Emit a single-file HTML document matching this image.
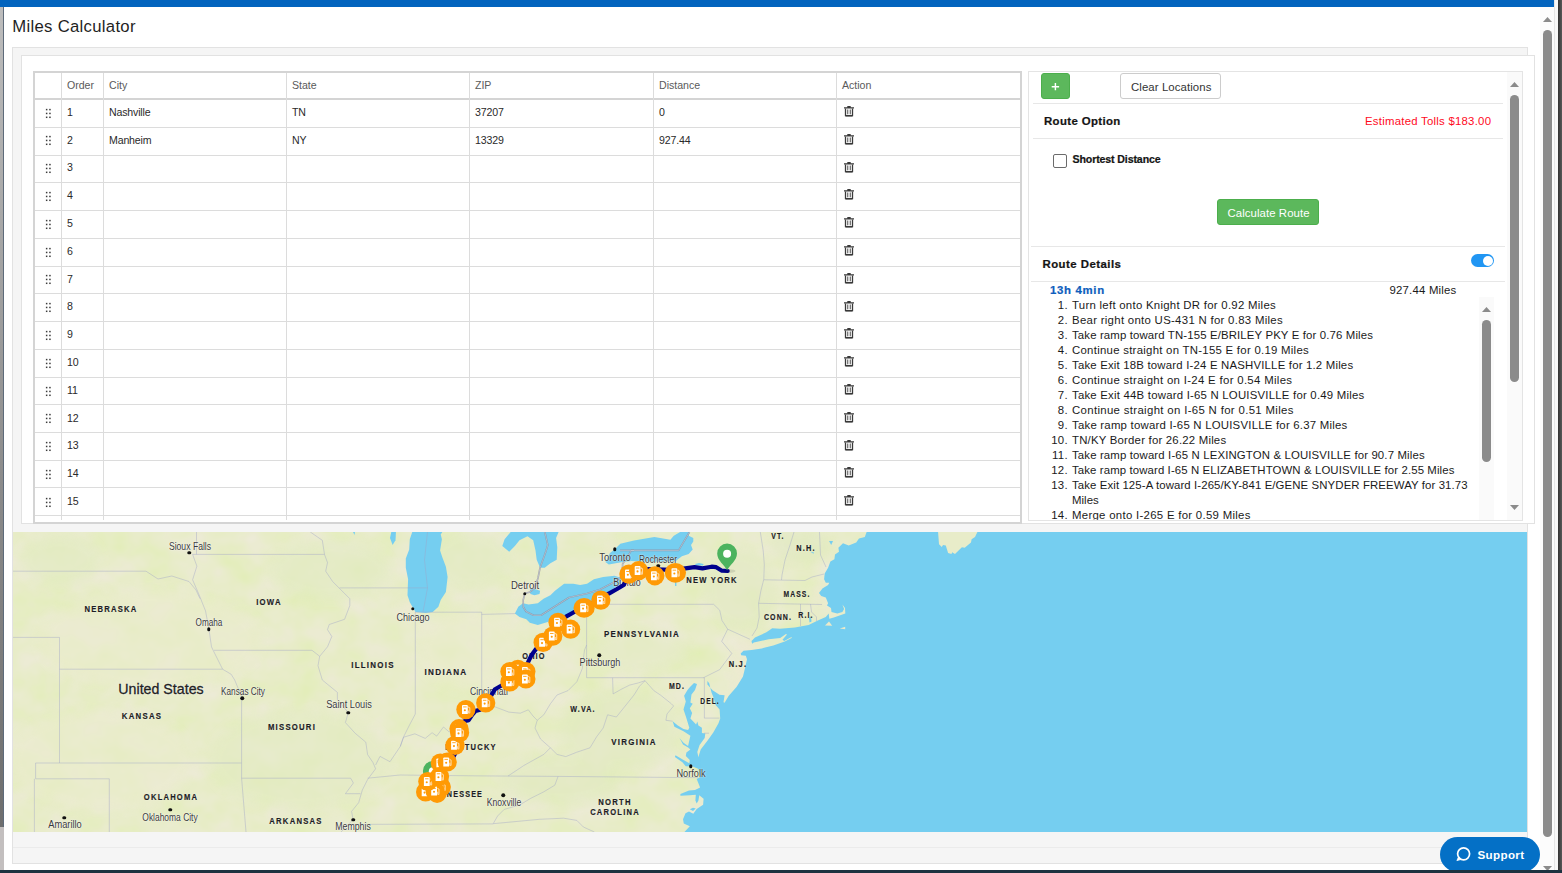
<!DOCTYPE html><html><head><meta charset="utf-8"><title>Miles Calculator</title><style>
*{box-sizing:border-box;margin:0;padding:0}
html,body{width:1562px;height:873px;overflow:hidden;background:#fff}
body{position:relative;font-family:"Liberation Sans",sans-serif;color:#222}
.abs{position:absolute}
.t{position:absolute;white-space:nowrap;line-height:1}
/* table text */
.c{position:absolute;white-space:nowrap;font-size:10.6px;line-height:12px;color:#2a2a2a;letter-spacing:-0.17px}
.h{position:absolute;white-space:nowrap;font-size:10.6px;line-height:12px;color:#5a5a5a;letter-spacing:-0.02px}
.vl{position:absolute;width:1px;background:#dcdcdc}
.hl{position:absolute;height:1px;background:#dcdcdc}
.dot{position:absolute;width:1.6px;height:1.6px;background:#505050;border-radius:.4px}
.v{position:absolute;white-space:nowrap;font-size:11.4px;line-height:15px;color:#1a1a1a;letter-spacing:.33px}
.vb{position:absolute;white-space:nowrap;font-weight:bold;color:#141414;-webkit-text-stroke:.22px currentColor}
.hr{position:absolute;height:1px;background:#e7e7e7}
.thumb{position:absolute;width:9px;background:#8b8b8b;border-radius:4.5px}
.ml{position:absolute;white-space:nowrap;font-weight:bold;font-size:9px;line-height:10px;color:#1d1d24;letter-spacing:1.55px;transform:translate(-50%,-50%);-webkit-text-stroke:.18px currentColor;text-shadow:0 0 2px rgba(255,255,255,.55)}
.mc{position:absolute;white-space:nowrap;font-size:10.2px;line-height:11px;color:#3a3a3a;transform:translate(-50%,-50%);text-shadow:0 0 2px rgba(255,255,255,.8),0 0 1px rgba(255,255,255,.8)}
.cd{position:absolute;width:3.5px;height:3.5px;border-radius:2px;background:#111;transform:translate(-50%,-50%)}
</style></head><body>
<div class="abs" style="left:0;top:0;width:1554px;height:7px;background:#0364be"></div>
<div class="abs" style="left:0;top:7px;width:3px;height:820px;background:linear-gradient(#bdbdbd 0,#a9a9a9 25%,#8a8a8a 60%,#6e6e6e 100%)"></div>
<div class="abs" style="left:3px;top:7px;width:1px;height:820px;background:#5e6b7a"></div>
<div class="abs" style="left:0;top:827px;width:4px;height:43px;background:#c3bfbf"></div>
<div class="abs" style="left:1540px;top:7px;width:14px;height:863px;background:#fcfcfc"></div>
<div class="abs" style="left:1554px;top:0;width:1px;height:870px;background:#e6e6e6"></div>
<div class="abs" style="left:1555px;top:0;width:3px;height:870px;background:#f8f8f8"></div>
<div class="abs" style="left:1558px;top:0;width:4px;height:870px;background:linear-gradient(90deg,#333,#585858)"></div>
<svg class="abs" style="left:1543px;top:17px" width="9" height="5"><path d="M0 5L4.5 0L9 5Z" fill="#8b8b8b"/></svg>
<div class="thumb" style="left:1543px;top:30px;height:807px"></div>
<svg class="abs" style="left:1543px;top:866px" width="9" height="5"><path d="M0 0L9 0L4.5 5Z" fill="#8b8b8b"/></svg>
<div class="abs" style="left:0;top:870px;width:1562px;height:3px;background:#1d3240"></div>
<div class="t" style="left:12.3px;top:17px;font-size:16.7px;line-height:20px;color:#1f1f1f;letter-spacing:.3px" id="title">Miles Calculator</div>
<div class="abs" style="left:12px;top:47px;width:1516px;height:817px;background:#f5f5f5;border:1px solid #e2e2e2"></div>
<div class="abs" style="left:13px;top:847px;width:1514px;height:1px;background:#ebebeb"></div>
<div class="abs" style="left:21px;top:55px;width:1514px;height:469px;background:#fff;border:1px solid #e2e2e2"></div>
<div class="abs" style="left:33px;top:71px;width:989px;height:453px;background:#fff;border:2px solid #d4d4d4"></div>
<div class="abs" style="left:35px;top:98px;width:985px;height:2px;background:#d4d4d4"></div>
<div class="vl" style="left:61px;top:73px;height:447px"></div>
<div class="vl" style="left:103px;top:73px;height:447px"></div>
<div class="vl" style="left:286px;top:73px;height:447px"></div>
<div class="vl" style="left:469px;top:73px;height:447px"></div>
<div class="vl" style="left:653px;top:73px;height:447px"></div>
<div class="vl" style="left:836px;top:73px;height:447px"></div>
<div class="h" style="left:67px;top:79px">Order</div>
<div class="h" style="left:109px;top:79px">City</div>
<div class="h" style="left:292px;top:79px">State</div>
<div class="h" style="left:475px;top:79px">ZIP</div>
<div class="h" style="left:659px;top:79px">Distance</div>
<div class="h" style="left:842px;top:79px">Action</div>
<div class="hl" style="left:35px;top:127px;width:985px"></div>
<svg class="abs" style="left:45px;top:107.65px" width="7" height="11" viewBox="0 0 7 11"><rect x="0.90" y="0.85" width="1.5" height="1.5" fill="#3c3c3c"/><rect x="0.90" y="4.70" width="1.5" height="1.5" fill="#3c3c3c"/><rect x="0.90" y="8.55" width="1.5" height="1.5" fill="#3c3c3c"/><rect x="4.20" y="0.85" width="1.5" height="1.5" fill="#3c3c3c"/><rect x="4.20" y="4.70" width="1.5" height="1.5" fill="#3c3c3c"/><rect x="4.20" y="8.55" width="1.5" height="1.5" fill="#3c3c3c"/></svg>
<div class="c" style="left:67px;top:105.8px">1</div>
<div class="c" style="left:109px;top:105.8px">Nashville</div>
<div class="c" style="left:292px;top:105.8px">TN</div>
<div class="c" style="left:475px;top:105.8px">37207</div>
<div class="c" style="left:659px;top:105.8px">0</div>
<svg class="abs" style="left:844px;top:105.9px" width="10" height="11" viewBox="0 0 10 11"><path d="M0 1.9h10M3.3 .6h3.4" stroke="#3a3a3a" stroke-width="1.2" fill="none"/><path d="M1.5 2.5v7.2h7V2.5" stroke="#3a3a3a" stroke-width="1.3" fill="none"/><path d="M3.75 3.5v4.8M6.25 3.5v4.8" stroke="#444" stroke-width=".95"/><path d="M1.5 9.9h7" stroke="#3a3a3a" stroke-width="1.2"/></svg>
<div class="hl" style="left:35px;top:155px;width:985px"></div>
<svg class="abs" style="left:45px;top:135.45px" width="7" height="11" viewBox="0 0 7 11"><rect x="0.90" y="0.85" width="1.5" height="1.5" fill="#3c3c3c"/><rect x="0.90" y="4.70" width="1.5" height="1.5" fill="#3c3c3c"/><rect x="0.90" y="8.55" width="1.5" height="1.5" fill="#3c3c3c"/><rect x="4.20" y="0.85" width="1.5" height="1.5" fill="#3c3c3c"/><rect x="4.20" y="4.70" width="1.5" height="1.5" fill="#3c3c3c"/><rect x="4.20" y="8.55" width="1.5" height="1.5" fill="#3c3c3c"/></svg>
<div class="c" style="left:67px;top:133.6px">2</div>
<div class="c" style="left:109px;top:133.6px">Manheim</div>
<div class="c" style="left:292px;top:133.6px">NY</div>
<div class="c" style="left:475px;top:133.6px">13329</div>
<div class="c" style="left:659px;top:133.6px">927.44</div>
<svg class="abs" style="left:844px;top:133.7px" width="10" height="11" viewBox="0 0 10 11"><path d="M0 1.9h10M3.3 .6h3.4" stroke="#3a3a3a" stroke-width="1.2" fill="none"/><path d="M1.5 2.5v7.2h7V2.5" stroke="#3a3a3a" stroke-width="1.3" fill="none"/><path d="M3.75 3.5v4.8M6.25 3.5v4.8" stroke="#444" stroke-width=".95"/><path d="M1.5 9.9h7" stroke="#3a3a3a" stroke-width="1.2"/></svg>
<div class="hl" style="left:35px;top:182px;width:985px"></div>
<svg class="abs" style="left:45px;top:163.25px" width="7" height="11" viewBox="0 0 7 11"><rect x="0.90" y="0.85" width="1.5" height="1.5" fill="#3c3c3c"/><rect x="0.90" y="4.70" width="1.5" height="1.5" fill="#3c3c3c"/><rect x="0.90" y="8.55" width="1.5" height="1.5" fill="#3c3c3c"/><rect x="4.20" y="0.85" width="1.5" height="1.5" fill="#3c3c3c"/><rect x="4.20" y="4.70" width="1.5" height="1.5" fill="#3c3c3c"/><rect x="4.20" y="8.55" width="1.5" height="1.5" fill="#3c3c3c"/></svg>
<div class="c" style="left:67px;top:161.4px">3</div>
<svg class="abs" style="left:844px;top:161.5px" width="10" height="11" viewBox="0 0 10 11"><path d="M0 1.9h10M3.3 .6h3.4" stroke="#3a3a3a" stroke-width="1.2" fill="none"/><path d="M1.5 2.5v7.2h7V2.5" stroke="#3a3a3a" stroke-width="1.3" fill="none"/><path d="M3.75 3.5v4.8M6.25 3.5v4.8" stroke="#444" stroke-width=".95"/><path d="M1.5 9.9h7" stroke="#3a3a3a" stroke-width="1.2"/></svg>
<div class="hl" style="left:35px;top:210px;width:985px"></div>
<svg class="abs" style="left:45px;top:191.05px" width="7" height="11" viewBox="0 0 7 11"><rect x="0.90" y="0.85" width="1.5" height="1.5" fill="#3c3c3c"/><rect x="0.90" y="4.70" width="1.5" height="1.5" fill="#3c3c3c"/><rect x="0.90" y="8.55" width="1.5" height="1.5" fill="#3c3c3c"/><rect x="4.20" y="0.85" width="1.5" height="1.5" fill="#3c3c3c"/><rect x="4.20" y="4.70" width="1.5" height="1.5" fill="#3c3c3c"/><rect x="4.20" y="8.55" width="1.5" height="1.5" fill="#3c3c3c"/></svg>
<div class="c" style="left:67px;top:189.2px">4</div>
<svg class="abs" style="left:844px;top:189.3px" width="10" height="11" viewBox="0 0 10 11"><path d="M0 1.9h10M3.3 .6h3.4" stroke="#3a3a3a" stroke-width="1.2" fill="none"/><path d="M1.5 2.5v7.2h7V2.5" stroke="#3a3a3a" stroke-width="1.3" fill="none"/><path d="M3.75 3.5v4.8M6.25 3.5v4.8" stroke="#444" stroke-width=".95"/><path d="M1.5 9.9h7" stroke="#3a3a3a" stroke-width="1.2"/></svg>
<div class="hl" style="left:35px;top:238px;width:985px"></div>
<svg class="abs" style="left:45px;top:218.85px" width="7" height="11" viewBox="0 0 7 11"><rect x="0.90" y="0.85" width="1.5" height="1.5" fill="#3c3c3c"/><rect x="0.90" y="4.70" width="1.5" height="1.5" fill="#3c3c3c"/><rect x="0.90" y="8.55" width="1.5" height="1.5" fill="#3c3c3c"/><rect x="4.20" y="0.85" width="1.5" height="1.5" fill="#3c3c3c"/><rect x="4.20" y="4.70" width="1.5" height="1.5" fill="#3c3c3c"/><rect x="4.20" y="8.55" width="1.5" height="1.5" fill="#3c3c3c"/></svg>
<div class="c" style="left:67px;top:217.0px">5</div>
<svg class="abs" style="left:844px;top:217.1px" width="10" height="11" viewBox="0 0 10 11"><path d="M0 1.9h10M3.3 .6h3.4" stroke="#3a3a3a" stroke-width="1.2" fill="none"/><path d="M1.5 2.5v7.2h7V2.5" stroke="#3a3a3a" stroke-width="1.3" fill="none"/><path d="M3.75 3.5v4.8M6.25 3.5v4.8" stroke="#444" stroke-width=".95"/><path d="M1.5 9.9h7" stroke="#3a3a3a" stroke-width="1.2"/></svg>
<div class="hl" style="left:35px;top:266px;width:985px"></div>
<svg class="abs" style="left:45px;top:246.65px" width="7" height="11" viewBox="0 0 7 11"><rect x="0.90" y="0.85" width="1.5" height="1.5" fill="#3c3c3c"/><rect x="0.90" y="4.70" width="1.5" height="1.5" fill="#3c3c3c"/><rect x="0.90" y="8.55" width="1.5" height="1.5" fill="#3c3c3c"/><rect x="4.20" y="0.85" width="1.5" height="1.5" fill="#3c3c3c"/><rect x="4.20" y="4.70" width="1.5" height="1.5" fill="#3c3c3c"/><rect x="4.20" y="8.55" width="1.5" height="1.5" fill="#3c3c3c"/></svg>
<div class="c" style="left:67px;top:244.8px">6</div>
<svg class="abs" style="left:844px;top:244.9px" width="10" height="11" viewBox="0 0 10 11"><path d="M0 1.9h10M3.3 .6h3.4" stroke="#3a3a3a" stroke-width="1.2" fill="none"/><path d="M1.5 2.5v7.2h7V2.5" stroke="#3a3a3a" stroke-width="1.3" fill="none"/><path d="M3.75 3.5v4.8M6.25 3.5v4.8" stroke="#444" stroke-width=".95"/><path d="M1.5 9.9h7" stroke="#3a3a3a" stroke-width="1.2"/></svg>
<div class="hl" style="left:35px;top:293px;width:985px"></div>
<svg class="abs" style="left:45px;top:274.45px" width="7" height="11" viewBox="0 0 7 11"><rect x="0.90" y="0.85" width="1.5" height="1.5" fill="#3c3c3c"/><rect x="0.90" y="4.70" width="1.5" height="1.5" fill="#3c3c3c"/><rect x="0.90" y="8.55" width="1.5" height="1.5" fill="#3c3c3c"/><rect x="4.20" y="0.85" width="1.5" height="1.5" fill="#3c3c3c"/><rect x="4.20" y="4.70" width="1.5" height="1.5" fill="#3c3c3c"/><rect x="4.20" y="8.55" width="1.5" height="1.5" fill="#3c3c3c"/></svg>
<div class="c" style="left:67px;top:272.6px">7</div>
<svg class="abs" style="left:844px;top:272.7px" width="10" height="11" viewBox="0 0 10 11"><path d="M0 1.9h10M3.3 .6h3.4" stroke="#3a3a3a" stroke-width="1.2" fill="none"/><path d="M1.5 2.5v7.2h7V2.5" stroke="#3a3a3a" stroke-width="1.3" fill="none"/><path d="M3.75 3.5v4.8M6.25 3.5v4.8" stroke="#444" stroke-width=".95"/><path d="M1.5 9.9h7" stroke="#3a3a3a" stroke-width="1.2"/></svg>
<div class="hl" style="left:35px;top:321px;width:985px"></div>
<svg class="abs" style="left:45px;top:302.25px" width="7" height="11" viewBox="0 0 7 11"><rect x="0.90" y="0.85" width="1.5" height="1.5" fill="#3c3c3c"/><rect x="0.90" y="4.70" width="1.5" height="1.5" fill="#3c3c3c"/><rect x="0.90" y="8.55" width="1.5" height="1.5" fill="#3c3c3c"/><rect x="4.20" y="0.85" width="1.5" height="1.5" fill="#3c3c3c"/><rect x="4.20" y="4.70" width="1.5" height="1.5" fill="#3c3c3c"/><rect x="4.20" y="8.55" width="1.5" height="1.5" fill="#3c3c3c"/></svg>
<div class="c" style="left:67px;top:300.4px">8</div>
<svg class="abs" style="left:844px;top:300.5px" width="10" height="11" viewBox="0 0 10 11"><path d="M0 1.9h10M3.3 .6h3.4" stroke="#3a3a3a" stroke-width="1.2" fill="none"/><path d="M1.5 2.5v7.2h7V2.5" stroke="#3a3a3a" stroke-width="1.3" fill="none"/><path d="M3.75 3.5v4.8M6.25 3.5v4.8" stroke="#444" stroke-width=".95"/><path d="M1.5 9.9h7" stroke="#3a3a3a" stroke-width="1.2"/></svg>
<div class="hl" style="left:35px;top:349px;width:985px"></div>
<svg class="abs" style="left:45px;top:330.05px" width="7" height="11" viewBox="0 0 7 11"><rect x="0.90" y="0.85" width="1.5" height="1.5" fill="#3c3c3c"/><rect x="0.90" y="4.70" width="1.5" height="1.5" fill="#3c3c3c"/><rect x="0.90" y="8.55" width="1.5" height="1.5" fill="#3c3c3c"/><rect x="4.20" y="0.85" width="1.5" height="1.5" fill="#3c3c3c"/><rect x="4.20" y="4.70" width="1.5" height="1.5" fill="#3c3c3c"/><rect x="4.20" y="8.55" width="1.5" height="1.5" fill="#3c3c3c"/></svg>
<div class="c" style="left:67px;top:328.2px">9</div>
<svg class="abs" style="left:844px;top:328.3px" width="10" height="11" viewBox="0 0 10 11"><path d="M0 1.9h10M3.3 .6h3.4" stroke="#3a3a3a" stroke-width="1.2" fill="none"/><path d="M1.5 2.5v7.2h7V2.5" stroke="#3a3a3a" stroke-width="1.3" fill="none"/><path d="M3.75 3.5v4.8M6.25 3.5v4.8" stroke="#444" stroke-width=".95"/><path d="M1.5 9.9h7" stroke="#3a3a3a" stroke-width="1.2"/></svg>
<div class="hl" style="left:35px;top:377px;width:985px"></div>
<svg class="abs" style="left:45px;top:357.85px" width="7" height="11" viewBox="0 0 7 11"><rect x="0.90" y="0.85" width="1.5" height="1.5" fill="#3c3c3c"/><rect x="0.90" y="4.70" width="1.5" height="1.5" fill="#3c3c3c"/><rect x="0.90" y="8.55" width="1.5" height="1.5" fill="#3c3c3c"/><rect x="4.20" y="0.85" width="1.5" height="1.5" fill="#3c3c3c"/><rect x="4.20" y="4.70" width="1.5" height="1.5" fill="#3c3c3c"/><rect x="4.20" y="8.55" width="1.5" height="1.5" fill="#3c3c3c"/></svg>
<div class="c" style="left:67px;top:356.0px">10</div>
<svg class="abs" style="left:844px;top:356.1px" width="10" height="11" viewBox="0 0 10 11"><path d="M0 1.9h10M3.3 .6h3.4" stroke="#3a3a3a" stroke-width="1.2" fill="none"/><path d="M1.5 2.5v7.2h7V2.5" stroke="#3a3a3a" stroke-width="1.3" fill="none"/><path d="M3.75 3.5v4.8M6.25 3.5v4.8" stroke="#444" stroke-width=".95"/><path d="M1.5 9.9h7" stroke="#3a3a3a" stroke-width="1.2"/></svg>
<div class="hl" style="left:35px;top:404px;width:985px"></div>
<svg class="abs" style="left:45px;top:385.65px" width="7" height="11" viewBox="0 0 7 11"><rect x="0.90" y="0.85" width="1.5" height="1.5" fill="#3c3c3c"/><rect x="0.90" y="4.70" width="1.5" height="1.5" fill="#3c3c3c"/><rect x="0.90" y="8.55" width="1.5" height="1.5" fill="#3c3c3c"/><rect x="4.20" y="0.85" width="1.5" height="1.5" fill="#3c3c3c"/><rect x="4.20" y="4.70" width="1.5" height="1.5" fill="#3c3c3c"/><rect x="4.20" y="8.55" width="1.5" height="1.5" fill="#3c3c3c"/></svg>
<div class="c" style="left:67px;top:383.8px">11</div>
<svg class="abs" style="left:844px;top:383.9px" width="10" height="11" viewBox="0 0 10 11"><path d="M0 1.9h10M3.3 .6h3.4" stroke="#3a3a3a" stroke-width="1.2" fill="none"/><path d="M1.5 2.5v7.2h7V2.5" stroke="#3a3a3a" stroke-width="1.3" fill="none"/><path d="M3.75 3.5v4.8M6.25 3.5v4.8" stroke="#444" stroke-width=".95"/><path d="M1.5 9.9h7" stroke="#3a3a3a" stroke-width="1.2"/></svg>
<div class="hl" style="left:35px;top:432px;width:985px"></div>
<svg class="abs" style="left:45px;top:413.45px" width="7" height="11" viewBox="0 0 7 11"><rect x="0.90" y="0.85" width="1.5" height="1.5" fill="#3c3c3c"/><rect x="0.90" y="4.70" width="1.5" height="1.5" fill="#3c3c3c"/><rect x="0.90" y="8.55" width="1.5" height="1.5" fill="#3c3c3c"/><rect x="4.20" y="0.85" width="1.5" height="1.5" fill="#3c3c3c"/><rect x="4.20" y="4.70" width="1.5" height="1.5" fill="#3c3c3c"/><rect x="4.20" y="8.55" width="1.5" height="1.5" fill="#3c3c3c"/></svg>
<div class="c" style="left:67px;top:411.6px">12</div>
<svg class="abs" style="left:844px;top:411.7px" width="10" height="11" viewBox="0 0 10 11"><path d="M0 1.9h10M3.3 .6h3.4" stroke="#3a3a3a" stroke-width="1.2" fill="none"/><path d="M1.5 2.5v7.2h7V2.5" stroke="#3a3a3a" stroke-width="1.3" fill="none"/><path d="M3.75 3.5v4.8M6.25 3.5v4.8" stroke="#444" stroke-width=".95"/><path d="M1.5 9.9h7" stroke="#3a3a3a" stroke-width="1.2"/></svg>
<div class="hl" style="left:35px;top:460px;width:985px"></div>
<svg class="abs" style="left:45px;top:441.25px" width="7" height="11" viewBox="0 0 7 11"><rect x="0.90" y="0.85" width="1.5" height="1.5" fill="#3c3c3c"/><rect x="0.90" y="4.70" width="1.5" height="1.5" fill="#3c3c3c"/><rect x="0.90" y="8.55" width="1.5" height="1.5" fill="#3c3c3c"/><rect x="4.20" y="0.85" width="1.5" height="1.5" fill="#3c3c3c"/><rect x="4.20" y="4.70" width="1.5" height="1.5" fill="#3c3c3c"/><rect x="4.20" y="8.55" width="1.5" height="1.5" fill="#3c3c3c"/></svg>
<div class="c" style="left:67px;top:439.4px">13</div>
<svg class="abs" style="left:844px;top:439.5px" width="10" height="11" viewBox="0 0 10 11"><path d="M0 1.9h10M3.3 .6h3.4" stroke="#3a3a3a" stroke-width="1.2" fill="none"/><path d="M1.5 2.5v7.2h7V2.5" stroke="#3a3a3a" stroke-width="1.3" fill="none"/><path d="M3.75 3.5v4.8M6.25 3.5v4.8" stroke="#444" stroke-width=".95"/><path d="M1.5 9.9h7" stroke="#3a3a3a" stroke-width="1.2"/></svg>
<div class="hl" style="left:35px;top:487px;width:985px"></div>
<svg class="abs" style="left:45px;top:469.05px" width="7" height="11" viewBox="0 0 7 11"><rect x="0.90" y="0.85" width="1.5" height="1.5" fill="#3c3c3c"/><rect x="0.90" y="4.70" width="1.5" height="1.5" fill="#3c3c3c"/><rect x="0.90" y="8.55" width="1.5" height="1.5" fill="#3c3c3c"/><rect x="4.20" y="0.85" width="1.5" height="1.5" fill="#3c3c3c"/><rect x="4.20" y="4.70" width="1.5" height="1.5" fill="#3c3c3c"/><rect x="4.20" y="8.55" width="1.5" height="1.5" fill="#3c3c3c"/></svg>
<div class="c" style="left:67px;top:467.2px">14</div>
<svg class="abs" style="left:844px;top:467.3px" width="10" height="11" viewBox="0 0 10 11"><path d="M0 1.9h10M3.3 .6h3.4" stroke="#3a3a3a" stroke-width="1.2" fill="none"/><path d="M1.5 2.5v7.2h7V2.5" stroke="#3a3a3a" stroke-width="1.3" fill="none"/><path d="M3.75 3.5v4.8M6.25 3.5v4.8" stroke="#444" stroke-width=".95"/><path d="M1.5 9.9h7" stroke="#3a3a3a" stroke-width="1.2"/></svg>
<div class="hl" style="left:35px;top:515px;width:985px"></div>
<svg class="abs" style="left:45px;top:496.85px" width="7" height="11" viewBox="0 0 7 11"><rect x="0.90" y="0.85" width="1.5" height="1.5" fill="#3c3c3c"/><rect x="0.90" y="4.70" width="1.5" height="1.5" fill="#3c3c3c"/><rect x="0.90" y="8.55" width="1.5" height="1.5" fill="#3c3c3c"/><rect x="4.20" y="0.85" width="1.5" height="1.5" fill="#3c3c3c"/><rect x="4.20" y="4.70" width="1.5" height="1.5" fill="#3c3c3c"/><rect x="4.20" y="8.55" width="1.5" height="1.5" fill="#3c3c3c"/></svg>
<div class="c" style="left:67px;top:495.0px">15</div>
<svg class="abs" style="left:844px;top:495.1px" width="10" height="11" viewBox="0 0 10 11"><path d="M0 1.9h10M3.3 .6h3.4" stroke="#3a3a3a" stroke-width="1.2" fill="none"/><path d="M1.5 2.5v7.2h7V2.5" stroke="#3a3a3a" stroke-width="1.3" fill="none"/><path d="M3.75 3.5v4.8M6.25 3.5v4.8" stroke="#444" stroke-width=".95"/><path d="M1.5 9.9h7" stroke="#3a3a3a" stroke-width="1.2"/></svg>
<div class="abs" style="left:1028px;top:71px;width:495px;height:450px;background:#fff;border:1px solid #e4e4e4"></div>
<div class="abs" style="left:1507px;top:72px;width:15px;height:448px;background:#fafafa"></div>
<svg class="abs" style="left:1510px;top:82px" width="9" height="5"><path d="M0 5L4.5 0L9 5Z" fill="#8b8b8b"/></svg>
<div class="thumb" style="left:1510px;top:95px;height:287px"></div>
<svg class="abs" style="left:1510px;top:505px" width="9" height="5"><path d="M0 0L9 0L4.5 5Z" fill="#8b8b8b"/></svg>
<div class="abs" style="left:1041px;top:73px;width:29px;height:26px;background:#5cb85c;border:1px solid #4cae4c;border-radius:3px"></div>
<svg class="abs" style="left:1050px;top:81px" width="11" height="11" viewBox="0 0 11 11"><path d="M1.7 5.65h7.4M5.4 1.95v7.4" stroke="#fff" stroke-width="1.45"/></svg>
<div class="abs" style="left:1120px;top:73px;width:101px;height:26px;background:#fff;border:1px solid #ccc;border-radius:3px"></div>
<div class="v" id="clr" style="left:1131px;top:79.5px;color:#333;letter-spacing:.09px">Clear Locations</div>
<div class="hr" style="left:1033px;top:103px;width:470px"></div>
<div class="vb" id="ro" style="left:1044px;top:114px;font-size:11.4px;line-height:15px;letter-spacing:.38px">Route Option</div>
<div class="v" id="tolls" style="left:1365px;top:114px;color:#ff0a1e;letter-spacing:.24px">Estimated Tolls $183.00</div>
<div class="hr" style="left:1033px;top:138px;width:470px"></div>
<div class="abs" style="left:1053px;top:154px;width:14px;height:14px;background:#fff;border:1px solid #6b6b6b;border-radius:2px"></div>
<div class="vb" id="sd" style="left:1072.5px;top:152px;font-size:10.6px;line-height:15px;letter-spacing:-.12px">Shortest Distance</div>
<div class="abs" style="left:1217px;top:199px;width:102px;height:26px;background:#5cb85c;border:1px solid #4cae4c;border-radius:3px"></div>
<div class="v" id="calc" style="left:1227.5px;top:206px;color:#fff;letter-spacing:.07px">Calculate Route</div>
<div class="hr" style="left:1031px;top:246px;width:474px"></div>
<div class="vb" id="rd" style="left:1042.5px;top:257px;font-size:11.4px;line-height:15px;letter-spacing:.47px">Route Details</div>
<div class="abs" style="left:1471px;top:254px;width:23px;height:13px;background:#2196f3;border-radius:6.5px"></div>
<div class="abs" style="left:1482.5px;top:255.5px;width:10px;height:10px;background:#fff;border-radius:5px"></div>
<div class="hr" style="left:1031px;top:281px;width:474px"></div>
<div class="vb" id="dur" style="left:1050px;top:283px;font-size:11.4px;line-height:15px;color:#0e5ebd;letter-spacing:.68px">13h 4min</div>
<div class="v" id="tot" style="left:1389.5px;top:283px;letter-spacing:.2px">927.44 Miles</div>
<div class="abs" style="left:1479px;top:297px;width:15px;height:223px;background:#fafafa"></div>
<svg class="abs" style="left:1482px;top:307px" width="9" height="5"><path d="M0 5L4.5 0L9 5Z" fill="#8b8b8b"/></svg>
<div class="thumb" style="left:1482px;top:320px;height:142px"></div>
<div class="abs" style="left:1031px;top:297px;width:448px;height:223px;overflow:hidden">
<div class="v" style="right:411px;top:0.5px">1.</div>
<div class="v" id="li0" style="left:41px;top:0.5px;letter-spacing:0.273px">Turn left onto Knight DR for 0.92 Miles</div>
<div class="v" style="right:411px;top:15.5px">2.</div>
<div class="v" id="li1" style="left:41px;top:15.5px;letter-spacing:0.296px">Bear right onto US-431 N for 0.83 Miles</div>
<div class="v" style="right:411px;top:30.5px">3.</div>
<div class="v" id="li2" style="left:41px;top:30.5px;letter-spacing:0.137px">Take ramp toward TN-155 E/BRILEY PKY E for 0.76 Miles</div>
<div class="v" style="right:411px;top:45.5px">4.</div>
<div class="v" id="li3" style="left:41px;top:45.5px;letter-spacing:0.268px">Continue straight on TN-155 E for 0.19 Miles</div>
<div class="v" style="right:411px;top:60.5px">5.</div>
<div class="v" id="li4" style="left:41px;top:60.5px;letter-spacing:0.190px">Take Exit 18B toward I-24 E NASHVILLE for 1.2 Miles</div>
<div class="v" style="right:411px;top:75.5px">6.</div>
<div class="v" id="li5" style="left:41px;top:75.5px;letter-spacing:0.316px">Continue straight on I-24 E for 0.54 Miles</div>
<div class="v" style="right:411px;top:90.5px">7.</div>
<div class="v" id="li6" style="left:41px;top:90.5px;letter-spacing:0.213px">Take Exit 44B toward I-65 N LOUISVILLE for 0.49 Miles</div>
<div class="v" style="right:411px;top:105.5px">8.</div>
<div class="v" id="li7" style="left:41px;top:105.5px;letter-spacing:0.335px">Continue straight on I-65 N for 0.51 Miles</div>
<div class="v" style="right:411px;top:120.5px">9.</div>
<div class="v" id="li8" style="left:41px;top:120.5px;letter-spacing:0.220px">Take ramp toward I-65 N LOUISVILLE for 6.37 Miles</div>
<div class="v" style="right:411px;top:135.5px">10.</div>
<div class="v" id="li9" style="left:41px;top:135.5px;letter-spacing:0.205px">TN/KY Border for 26.22 Miles</div>
<div class="v" style="right:411px;top:150.5px">11.</div>
<div class="v" id="li10" style="left:41px;top:150.5px;letter-spacing:0.140px">Take ramp toward I-65 N LEXINGTON &amp; LOUISVILLE for 90.7 Miles</div>
<div class="v" style="right:411px;top:165.5px">12.</div>
<div class="v" id="li11" style="left:41px;top:165.5px;letter-spacing:0.113px">Take ramp toward I-65 N ELIZABETHTOWN &amp; LOUISVILLE for 2.55 Miles</div>
<div class="v" style="right:411px;top:180.5px">13.</div>
<div class="v" id="li12" style="left:41px;top:180.5px;letter-spacing:0.104px">Take Exit 125-A toward I-265/KY-841 E/GENE SNYDER FREEWAY for 31.73</div>
<div class="v" id="li13" style="left:41px;top:195.5px;letter-spacing:0.052px">Miles</div>
<div class="v" style="right:411px;top:210.5px">14.</div>
<div class="v" id="li14" style="left:41px;top:210.5px;letter-spacing:0.292px">Merge onto I-265 E for 0.59 Miles</div>
</div>
<svg class="abs" style="left:13px;top:532px" width="1514" height="300" viewBox="13 532 1514 300">
<defs><filter id="bl" x="-50%" y="-50%" width="200%" height="200%"><feGaussianBlur stdDeviation="5"/></filter></defs>
<filter id="tx" x="0" y="0" width="100%" height="100%" color-interpolation-filters="sRGB"><feTurbulence type="fractalNoise" baseFrequency=".028 .034" numOctaves="3" seed="11"/><feColorMatrix type="matrix" values=".055 0 0 0 .882  -.015 0 0 0 .933  .16 0 0 0 .708  0 0 0 0 1"/></filter>
<rect x="13" y="532" width="1514" height="300" fill="#e8ecc9"/>
<rect x="13" y="532" width="900" height="300" filter="url(#tx)"/>
<g filter="url(#bl)" opacity=".55">
<ellipse cx="330" cy="570" rx="60" ry="30" fill="#e2ebc2"/>
<ellipse cx="300" cy="760" rx="90" ry="50" fill="#e3ebc3"/>
<ellipse cx="620" cy="730" rx="60" ry="40" fill="#e1eac0"/>
<ellipse cx="560" cy="780" rx="60" ry="25" fill="#e1eac0"/>
<ellipse cx="740" cy="590" rx="35" ry="40" fill="#e2eac2"/>
<ellipse cx="800" cy="545" rx="30" ry="18" fill="#e0e9c0"/>
<ellipse cx="60" cy="560" rx="40" ry="25" fill="#e2ebc2"/>
<ellipse cx="470" cy="560" rx="40" ry="30" fill="#e3ebc4"/>
<ellipse cx="150" cy="640" rx="110" ry="50" fill="#ebecce"/>
<ellipse cx="100" cy="760" rx="90" ry="50" fill="#ebecce"/>
<ellipse cx="470" cy="650" rx="50" ry="40" fill="#ebecce"/>
<ellipse cx="640" cy="650" rx="50" ry="22" fill="#e4ebc4"/>
<ellipse cx="412" cy="606" rx="12" ry="9" fill="#efe9d6"/>
<ellipse cx="523" cy="592" rx="10" ry="8" fill="#efe9d6"/>
<ellipse cx="748" cy="647" rx="12" ry="8" fill="#f0e7d8"/>
<ellipse cx="822" cy="593" rx="8" ry="7" fill="#efe8d6"/>
<ellipse cx="740" cy="670" rx="8" ry="14" fill="#eee9d2"/>
<ellipse cx="612" cy="550" rx="9" ry="6" fill="#efe9d6"/>
</g>
<path d="M867.0 531.0L864.8 536.9L859.0 538.6L856.2 542.6L848.7 545.5L843.0 543.2L838.4 547.8L839.0 551.8L835.0 554.6L834.4 559.2L830.4 561.5L828.1 567.8L824.7 573.5L824.1 579.3L825.8 582.7L829.3 582.7L828.1 585.0L822.4 588.4L819.0 593.0L821.2 595.9L825.8 597.6L828.1 603.3L827.0 605.6L831.0 607.9L831.5 611.9L837.3 613.6L842.4 611.9L844.1 609.0L842.4 604.5L845.0 607.9L845.3 613.6L833.8 617.6L829.3 618.8L828.7 613.6L825.8 617.0L817.8 620.5L808.6 625.1L794.9 627.4L780.0 628.7L772.2 628.3L766.4 632.3L755.0 637.5L751.5 640.9L752.1 643.8L753.8 642.6L768.7 639.2L780.2 638.1L785.9 634.1L787.0 634.6L782.5 639.8L784.2 640.9L791.6 636.9L791.6 638.1L784.8 641.5L773.3 645.5L761.9 648.4L751.5 650.1L743.5 650.7L740.7 653.5L741.2 655.2L745.8 655.8L747.0 659.3L745.2 667.3L743.0 676.4L736.7 686.7L728.6 695.9L724.6 702.8L723.5 702.2L724.6 695.3L719.5 694.8L712.6 690.2L707.4 684.5L707.4 681.0L709.2 683.3L711.5 692.5L713.3 696.9L715.6 704.9L719.6 709.5L720.2 718.6L718.5 723.2L713.3 732.4L707.6 740.4L700.7 749.6L698.4 757.0L698.4 769.0L700.1 777.1L696.7 779.0L700.1 787.5L695.0 790.1L689.0 790.5L680.4 794.0L680.4 795.7L689.8 795.2L695.8 794.8L695.4 800.4L696.7 803.4L698.4 800.4L699.3 795.2L703.6 798.7L703.1 804.7L696.7 809.0L693.3 813.7L689.0 811.5L685.5 813.3L683.0 819.3L683.8 823.6L689.8 826.2L683.5 833.0L1528.0 833.0L1528.0 531.0Z" fill="#75cef0"/>
<path d="M700.2 768.0L700.2 758.0L698.4 757.0L697.3 751.9L699.6 745.0L704.7 738.1L705.3 733.5L701.9 733.0L701.9 727.8L698.4 725.5L697.3 721.5L696.1 724.4L690.4 718.6L692.1 712.9L689.8 708.3L692.7 703.7L690.4 702.6L691.5 694.6L695.0 690.0L697.0 684.0L694.0 683.0L690.0 687.0L687.5 690.0L684.1 695.7L685.8 701.5L683.5 709.5L685.8 716.3L689.3 727.8L688.1 730.1L683.5 728.9L677.8 725.5L672.6 721.2L674.4 726.7L683.5 731.2L690.4 735.8L689.3 740.4L688.1 746.1L683.5 742.7L679.5 738.1L683.0 744.4L688.1 747.4L690.4 749.6L686.4 752.4L685.8 755.9L689.8 759.9L689.3 763.3L683.5 759.9L675.5 755.3L674.9 757.0L682.4 762.2L685.8 766.2L692.7 766.4L698.6 769.0Z" fill="#75cef0"/>
<path d="M412.6 531.0L409.8 539.2L409.2 549.5L405.8 558.6L405.8 567.8L408.1 579.3L407.5 595.3L409.8 602.2L415.5 611.9L425.8 613.0L432.7 611.9L438.4 606.7L440.7 599.9L445.9 591.9L447.6 577.0L445.9 566.7L442.4 557.5L440.1 550.6L441.9 539.2L440.7 534.6L443.0 531.0Z" fill="#75cef0"/>
<path d="M391.5 531.0L390.0 538.0L392.6 544.9L395.5 540.3L396.0 531.0Z" fill="#75cef0"/>
<path d="M511.5 531.0L504.6 539.2L502.3 546.0L509.2 551.8L514.9 546.0L519.5 540.3L527.5 536.3L533.2 540.3L535.5 550.6L536.7 559.8L540.1 567.8L544.7 567.8L550.4 563.2L556.7 559.8L557.3 547.2L556.1 538.0L559.0 531.0Z" fill="#75cef0"/>
<path d="M529.8 589.6L533.2 588.4L540.1 590.7L539.5 594.1L534.4 595.3L530.4 594.1Z" fill="#75cef0"/>
<path d="M514.9 613.6L518.3 606.7L522.9 603.3L528.6 604.5L537.8 603.3L543.5 598.7L550.4 595.3L555.0 590.7L564.1 583.8L573.3 583.8L580.2 585.0L587.1 583.8L593.9 579.3L603.1 577.0L614.5 575.8L621.4 578.1L620.3 583.8L608.8 591.9L600.8 595.3L591.6 601.0L580.2 607.9L568.7 614.8L559.6 620.5L549.3 621.6L537.8 625.1L529.8 622.8L526.3 619.3L519.5 617.0Z" fill="#75cef0"/>
<path d="M605.4 562.1L610.0 552.9L614.5 549.5L620.3 543.8L634.0 540.5L654.4 536.9L670.4 539.7L673.8 535.7L681.9 531.0L689.9 531.0L688.7 535.7L693.3 538.0L693.3 541.5L691.0 544.9L692.7 549.5L688.7 554.0L681.9 556.3L677.3 559.8L676.1 560.9L660.0 561.8L640.0 561.5L631.7 560.9L622.6 562.1L608.8 564.4Z" fill="#75cef0"/>
<path d="M695.0 564.0L699.0 563.0L703.6 564.0L703.0 565.6L696.0 565.6Z" fill="#75cef0"/>
<path d="M675.0 582.0L676.4 582.0L676.4 586.0L675.0 586.0Z" fill="#75cef0"/>
<path d="M809.0 617.5L811.0 616.5L811.5 621.5L809.5 622.5Z" fill="#75cef0"/>
<path d="M829.0 541.0L833.0 541.0L831.2 545.0Z" fill="#75cef0"/>
<path d="M353.0 532.0L355.0 532.0L354.5 535.0Z" fill="#75cef0"/>
<path d="M810.0 551.5L814.0 552.5L813.5 553.8Z" fill="#75cef0"/>
<path d="M938.0 531.0L939.0 544.3L941.8 547.0L943.0 544.9L945.8 545.5L948.1 552.9L951.5 554.0L952.1 552.3L955.0 554.0L961.9 547.2L964.7 547.8L971.0 542.6L971.6 539.2L975.0 536.9L977.9 531.0Z" fill="#e8ecc9"/>
<path d="M825.0 625.6L829.0 621.6L832.2 625.8Z" fill="#ece9c9"/>
<path d="M839.8 628.6L845.2 626.8L845.2 629.2Z" fill="#ece9c9"/>
<path d="M689.8 809.3L693 807.8L695.8 808.6L693 811Z" fill="#75cef0"/>
<g fill="none" stroke="#9da2c8" stroke-width=".8" stroke-opacity=".52" stroke-linejoin="round">
<path d="M13.0 571.2L146.0 571.2L158.0 579.0L171.8 576.0L189.0 581.5L196.0 590.0L200.0 598.7"/>
<path d="M13.0 637.4L59.5 637.4L59.5 763.0"/>
<path d="M59.5 669.2L222.6 669.2"/>
<path d="M35.6 763.0L241.5 763.0"/>
<path d="M35.6 763.0L35.6 778.8L109.3 778.8L109.3 832.0"/>
<path d="M34.4 778.8L34.4 832.0"/>
<path d="M196.5 532.0L196.5 554.4"/>
<path d="M192.6 554.4L324.5 554.4"/>
<path d="M192.6 554.4L196.9 566.1L192.6 579.8L198.6 593.6L205.5 610.8L208.9 628.8L211.5 646.8L214.0 652.0L222.6 669.2L231.2 674.3L234.7 680.0L242.2 698.1"/>
<path d="M214.0 650.3L312.0 650.3L319.7 656.3"/>
<path d="M241.6 698.1L241.6 778.2L246.0 832.0"/>
<path d="M241.6 778.2L350.7 778.2L353.4 783.0L345.4 793.7L360.5 793.7"/>
<path d="M310.3 532.0L322.3 540.3L324.5 554.4L327.5 562.6L325.7 571.2L332.6 581.5L339.5 588.4L349.8 598.7L349.8 605.6L344.6 619.3L329.2 624.5L327.5 629.7L331.8 636.5L327.5 646.8L319.7 656.3L318.0 665.7L322.3 680.0L337.4 692.4L337.4 699.5L348.3 712.7L345.4 722.6L355.2 733.3L365.8 742.2L367.6 754.6L373.0 762.6L375.6 768.8L367.6 779.5L362.3 790.1L358.7 802.6L351.6 811.4L353.1 819.6L341.0 832.0"/>
<path d="M339.5 587.9L427.5 587.9"/>
<path d="M375.6 765.0L380.0 756.4L390.0 761.7L400.3 746.4L403.4 737.3L414.9 733.8L425.2 738.4L432.1 732.7L436.7 736.1L443.5 727.0L449.3 732.1L458.0 722.0L470.0 716.0L480.0 708.0L485.0 702.0L495.1 706.9L508.8 712.1L520.3 713.2L528.3 709.8L533.0 716.0L537.2 720.3L543.8 714.8L550.4 703.8L557.0 695.0L568.0 690.6L576.8 681.8L582.3 668.6L583.5 658.0L584.5 650.0L586.6 645.0"/>
<path d="M415.3 612.0L415.3 714.0L409.0 726.0L404.0 736.0L400.3 746.4"/>
<path d="M427.5 532.0L424.5 560.0L427.5 588.0L423.0 612.0"/>
<path d="M415.3 612.2L481.7 612.2"/>
<path d="M481.7 612.2L481.7 700.0"/>
<path d="M481.7 614.4L515.2 613.6"/>
<path d="M367.6 778.2L400.0 775.0L480.0 775.9L558.0 776.4L678.0 777.5L698.0 777.6"/>
<path d="M353.0 824.4L493.2 823.9"/>
<path d="M493.2 823.7L497.6 816.0L504.2 809.4L519.6 805.0L530.6 798.4L543.8 791.8L554.8 785.2L558.1 776.4"/>
<path d="M493.2 823.7L539.4 819.3L563.6 818.2L576.8 820.4L583.4 827.0L594.4 832.0"/>
<path d="M537.2 720.3L535.0 728.0L540.5 739.0L550.4 747.8L543.8 754.4L524.0 765.4L510.8 774.2L508.0 776.0"/>
<path d="M550.4 747.8L557.0 754.4L565.8 756.6L576.8 752.2L590.0 747.8L596.6 736.8L603.2 728.0L607.6 714.8L616.4 717.0L625.2 706.0L634.0 695.0L639.5 686.2L645.0 680.7"/>
<path d="M645.0 680.7L638.4 682.9L629.6 685.1L620.8 689.5L613.1 693.9L612.6 677.8"/>
<path d="M645.0 680.7L653.8 690.6L660.4 695.0L671.4 703.8L673.6 706.0L667.0 714.0L665.9 720.3L672.6 721.2"/>
<path d="M586.6 600.0L586.6 677.7L704.4 677.7"/>
<path d="M586.6 604.3L713.6 604.3L719.7 610.2L722.0 620.5L727.7 629.2L721.7 641.3L731.8 653.4L719.7 669.6L703.5 677.7"/>
<path d="M704.4 677.7L704.4 718.1L719.5 718.1"/>
<path d="M709.0 733.2L704.0 733.2"/>
<path d="M727.7 629.2L750.0 639.3"/>
<path d="M760.3 532.0L763.2 550.6L764.3 564.4L763.8 579.3L760.9 590.7L758.6 603.3L759.2 617.0L757.0 628.0L752.0 636.0"/>
<path d="M763.8 579.8L805.0 580.5L812.0 577.0L824.0 574.0"/>
<path d="M758.6 603.3L822.0 604.5"/>
<path d="M800.5 604.0L800.5 626.0"/>
<path d="M810.5 604.0L811.5 612.0L816.5 617.0L816.5 621.0"/>
<path d="M794.0 532.0L790.0 545.0L785.0 560.0L782.0 575.0L781.5 580.0"/>
<path d="M819.5 532.0L820.5 555.0L826.0 567.0"/>
</g>
<g fill="none" stroke="#85869a" stroke-width="1.6" stroke-opacity=".75" stroke-linejoin="round">
<path d="M620.0 550.4L633.0 550.4L678.6 550.4L689.5 532.0"/>
<path d="M524.7 593.6L523.2 600.0L523.3 607.0L526.0 611.5L533.5 615.3L541.0 615.3L569.0 597.5L587.0 593.5L600.0 589.5L613.5 582.5L620.0 578.0L622.6 572.0L622.6 564.0L631.5 550.4L634.0 550.4"/>
<path d="M524.7 593.6L530.0 592.0L535.0 588.0L538.0 578.0L540.0 568.0L546.0 551.0L547.8 545.0L544.8 532.0"/>
</g>
<g fill="none" stroke="#dfe6ee" stroke-width=".5" stroke-opacity=".9" stroke-linejoin="round">
<path d="M620.0 550.4L633.0 550.4L678.6 550.4L689.5 532.0"/>
<path d="M524.7 593.6L523.2 600.0L523.3 607.0L526.0 611.5L533.5 615.3L541.0 615.3L569.0 597.5L587.0 593.5L600.0 589.5L613.5 582.5L620.0 578.0L622.6 572.0L622.6 564.0L631.5 550.4L634.0 550.4"/>
<path d="M524.7 593.6L530.0 592.0L535.0 588.0L538.0 578.0L540.0 568.0L546.0 551.0L547.8 545.0L544.8 532.0"/>
</g>
</svg>
<div class="abs" style="left:13px;top:532px;width:1514px;height:300px;overflow:hidden">
<div class="ml" style="left:98.2px;top:77.0px;letter-spacing:1.45px;transform:translate(-50%,-50%) scaleX(0.848)">NEBRASKA</div>
<div class="ml" style="left:256.4px;top:69.8px;letter-spacing:1.45px;transform:translate(-50%,-50%) scaleX(0.857)">IOWA</div>
<div class="ml" style="left:360.1px;top:132.9px;letter-spacing:1.45px;transform:translate(-50%,-50%) scaleX(0.881)">ILLINOIS</div>
<div class="ml" style="left:433.0px;top:140.1px;letter-spacing:1.45px;transform:translate(-50%,-50%) scaleX(0.900)">INDIANA</div>
<div class="ml" style="left:520.6px;top:124.1px;letter-spacing:1.45px;transform:translate(-50%,-50%) scaleX(0.815)">OHIO</div>
<div class="ml" style="left:128.5px;top:184.1px;letter-spacing:1.45px;transform:translate(-50%,-50%) scaleX(0.866)">KANSAS</div>
<div class="ml" style="left:278.8px;top:194.7px;letter-spacing:1.45px;transform:translate(-50%,-50%) scaleX(0.858)">MISSOURI</div>
<div class="ml" style="left:457.5px;top:214.8px;letter-spacing:1.45px;transform:translate(-50%,-50%) scaleX(0.838)">KENTUCKY</div>
<div class="ml" style="left:443.1px;top:262.1px;letter-spacing:1.45px;transform:translate(-50%,-50%) scaleX(0.802)">TENNESSEE</div>
<div class="ml" style="left:157.8px;top:265.0px;letter-spacing:1.45px;transform:translate(-50%,-50%) scaleX(0.841)">OKLAHOMA</div>
<div class="ml" style="left:282.6px;top:289.2px;letter-spacing:1.45px;transform:translate(-50%,-50%) scaleX(0.852)">ARKANSAS</div>
<div class="ml" style="left:629.4px;top:102.4px;letter-spacing:1.45px;transform:translate(-50%,-50%) scaleX(0.879)">PENNSYLVANIA</div>
<div class="ml" style="left:569.8px;top:177.2px;letter-spacing:1.45px;transform:translate(-50%,-50%) scaleX(0.793)">W.VA.</div>
<div class="ml" style="left:621.4px;top:210.4px;letter-spacing:1.45px;transform:translate(-50%,-50%) scaleX(0.879)">VIRGINIA</div>
<div class="ml" style="left:602.1px;top:269.8px;letter-spacing:1.45px;transform:translate(-50%,-50%) scaleX(0.854)">NORTH</div>
<div class="ml" style="left:602.1px;top:280.4px;letter-spacing:1.45px;transform:translate(-50%,-50%) scaleX(0.841)">CAROLINA</div>
<div class="ml" style="left:664.2px;top:153.8px;letter-spacing:1.45px;transform:translate(-50%,-50%) scaleX(0.773)">MD.</div>
<div class="ml" style="left:697.3px;top:169.2px;letter-spacing:1.45px;transform:translate(-50%,-50%) scaleX(0.732)">DEL.</div>
<div class="ml" style="left:724.9px;top:132.4px;letter-spacing:1.45px;transform:translate(-50%,-50%) scaleX(0.834)">N.J.</div>
<div class="ml" style="left:765.3px;top:85.0px;letter-spacing:1.45px;transform:translate(-50%,-50%) scaleX(0.779)">CONN.</div>
<div class="ml" style="left:793.2px;top:83.4px;letter-spacing:1.45px;transform:translate(-50%,-50%) scaleX(0.773)">R.I.</div>
<div class="ml" style="left:784.0px;top:62.0px;letter-spacing:1.45px;transform:translate(-50%,-50%) scaleX(0.752)">MASS.</div>
<div class="ml" style="left:793.2px;top:16.3px;letter-spacing:1.45px;transform:translate(-50%,-50%) scaleX(0.814)">N.H.</div>
<div class="ml" style="left:765.1px;top:4.2px;letter-spacing:1.45px;transform:translate(-50%,-50%) scaleX(0.766)">VT.</div>
<div class="ml" style="left:698.7px;top:47.5px;letter-spacing:1.45px;transform:translate(-50%,-50%) scaleX(0.847)">NEW YORK</div>
<div class="cd" style="left:176.3px;top:20.6px"></div>
<div class="mc" style="left:176.5px;top:13.5px;transform:translate(-50%,-50%) scaleX(0.847)">Sioux Falls</div>
<div class="cd" style="left:195.9px;top:97.0px"></div>
<div class="mc" style="left:195.9px;top:89.6px;transform:translate(-50%,-50%) scaleX(0.802)">Omaha</div>
<div class="cd" style="left:229.2px;top:166.1px"></div>
<div class="mc" style="left:229.6px;top:158.7px;transform:translate(-50%,-50%) scaleX(0.809)">Kansas City</div>
<div class="cd" style="left:335.3px;top:180.7px"></div>
<div class="mc" style="left:335.7px;top:172.3px;transform:translate(-50%,-50%) scaleX(0.905)">Saint Louis</div>
<div class="cd" style="left:340.1px;top:287.6px"></div>
<div class="mc" style="left:340.4px;top:294.2px;transform:translate(-50%,-50%) scaleX(0.861)">Memphis</div>
<div class="cd" style="left:399.5px;top:76.7px"></div>
<div class="mc" style="left:399.6px;top:84.5px;transform:translate(-50%,-50%) scaleX(0.888)">Chicago</div>
<div class="cd" style="left:511.8px;top:61.6px"></div>
<div class="mc" style="left:511.9px;top:53.3px;transform:translate(-50%,-50%) scaleX(0.936)">Detroit</div>
<div class="cd" style="left:601.5px;top:17.3px"></div>
<div class="mc" style="left:601.5px;top:25.0px;transform:translate(-50%,-50%) scaleX(0.927)">Toronto</div>
<div class="cd" style="left:645.1px;top:33.7px"></div>
<div class="mc" style="left:644.9px;top:26.6px;transform:translate(-50%,-50%) scaleX(0.818)">Rochester</div>
<div class="mc" style="left:614.2px;top:49.5px;transform:translate(-50%,-50%) scaleX(0.872)">Buffalo</div>
<div class="mc" style="left:475.7px;top:158.6px;transform:translate(-50%,-50%) scaleX(0.845)">Cincinnati</div>
<div class="cd" style="left:586.4px;top:123.0px"></div>
<div class="mc" style="left:586.8px;top:129.7px;transform:translate(-50%,-50%) scaleX(0.889)">Pittsburgh</div>
<div class="cd" style="left:490.4px;top:263.1px"></div>
<div class="mc" style="left:490.5px;top:269.5px;transform:translate(-50%,-50%) scaleX(0.844)">Knoxville</div>
<div class="cd" style="left:677.9px;top:234.2px"></div>
<div class="mc" style="left:677.9px;top:241.1px;transform:translate(-50%,-50%) scaleX(0.901)">Norfolk</div>
<div class="cd" style="left:157.2px;top:277.7px"></div>
<div class="mc" style="left:157.4px;top:284.5px;transform:translate(-50%,-50%) scaleX(0.829)">Oklahoma City</div>
<div class="cd" style="left:51.4px;top:285.8px"></div>
<div class="mc" style="left:51.5px;top:292.3px;transform:translate(-50%,-50%) scaleX(0.910)">Amarillo</div>
<div class="mc" style="left:147.7px;top:157.0px;font-size:14.4px;line-height:16px;color:#222;-webkit-text-stroke:.3px #222;transform:translate(-50%,-50%) scaleX(0.988)">United States</div>
</div>
<svg class="abs" style="left:13px;top:532px" width="1514" height="300" viewBox="13 532 1514 300">
<path d="M433.0 789.0L437.0 782.0L439.2 776.5L441.0 770.0L446.8 762.3L453.0 757.5L456.0 752.0L455.0 745.3L457.0 738.0L459.6 732.7L462.0 726.0L464.1 721.2L468.7 720.1L472.0 715.0L475.6 710.9L480.2 709.8L485.7 702.9L491.6 694.9L495.0 689.2L502.0 685.2L509.9 681.9L520.0 676.0L525.9 671.0L528.2 661.9L531.6 655.0L536.2 648.7L543.1 642.4L552.8 634.0L558.0 625.0L566.0 616.6L575.2 611.5L583.8 607.6L600.8 598.9L608.8 593.6L617.0 589.0L623.7 585.0L627.0 578.0L632.0 573.0L640.0 570.5L647.5 569.0L663.5 569.6L676.0 570.0L685.3 568.4L694.5 567.2L702.5 568.4L711.6 566.7L716.2 567.2L721.9 570.7L727.7 571.0" fill="none" stroke="#00008d" stroke-width="4.2" stroke-linejoin="round" stroke-linecap="round"/>
<g transform="translate(432.8 787.8)"><path d="M0 0C-2.4 -5.2 -9.9 -9.6 -9.9 -16.8A9.9 9.9 0 0 1 9.9 -16.8C9.9 -9.6 2.4 -5.2 0 0Z" fill="#4cb35f"/><circle cx="0" cy="-16.6" r="4" fill="#fff"/></g>
<g transform="translate(437.1 793.3)"><circle r="9.6" fill="#ff9a05"/><path d="M-3.9 4.4v-8.1q0-.9 .9-.9h4q.9 0 .9 .9v8.1z" fill="#fff"/><path d="M-2.75 -3.1h3.5v.85h-3.5z" fill="#ff9a05"/><circle cx="-1.05" cy=".7" r="1.05" fill="#ff9a05"/><path d="M2.3 -2.9l1.6 1.3v4.4c0 .9-1.35 .9-1.35 0v-2" fill="none" stroke="#fff" stroke-opacity=".6" stroke-width="1.1"/></g>
<g transform="translate(441.3 787.0)"><circle r="9.6" fill="#ff9a05"/><path d="M-3.9 4.4v-8.1q0-.9 .9-.9h4q.9 0 .9 .9v8.1z" fill="#fff"/><path d="M-2.75 -3.1h3.5v.85h-3.5z" fill="#ff9a05"/><circle cx="-1.05" cy=".7" r="1.05" fill="#ff9a05"/><path d="M2.3 -2.9l1.6 1.3v4.4c0 .9-1.35 .9-1.35 0v-2" fill="none" stroke="#fff" stroke-opacity=".6" stroke-width="1.1"/></g>
<g transform="translate(425.6 791.9)"><circle r="9.6" fill="#ff9a05"/><path d="M-3.9 4.4v-8.1q0-.9 .9-.9h4q.9 0 .9 .9v8.1z" fill="#fff"/><path d="M-2.75 -3.1h3.5v.85h-3.5z" fill="#ff9a05"/><circle cx="-1.05" cy=".7" r="1.05" fill="#ff9a05"/><path d="M2.3 -2.9l1.6 1.3v4.4c0 .9-1.35 .9-1.35 0v-2" fill="none" stroke="#fff" stroke-opacity=".6" stroke-width="1.1"/></g>
<g transform="translate(435.1 791.0)"><circle r="9.6" fill="#ff9a05"/><path d="M-3.9 4.4v-8.1q0-.9 .9-.9h4q.9 0 .9 .9v8.1z" fill="#fff"/><path d="M-2.75 -3.1h3.5v.85h-3.5z" fill="#ff9a05"/><circle cx="-1.05" cy=".7" r="1.05" fill="#ff9a05"/><path d="M2.3 -2.9l1.6 1.3v4.4c0 .9-1.35 .9-1.35 0v-2" fill="none" stroke="#fff" stroke-opacity=".6" stroke-width="1.1"/></g>
<g transform="translate(427.8 781.5)"><circle r="9.6" fill="#ff9a05"/><path d="M-3.9 4.4v-8.1q0-.9 .9-.9h4q.9 0 .9 .9v8.1z" fill="#fff"/><path d="M-2.75 -3.1h3.5v.85h-3.5z" fill="#ff9a05"/><circle cx="-1.05" cy=".7" r="1.05" fill="#ff9a05"/><path d="M2.3 -2.9l1.6 1.3v4.4c0 .9-1.35 .9-1.35 0v-2" fill="none" stroke="#fff" stroke-opacity=".6" stroke-width="1.1"/></g>
<g transform="translate(440.3 763.0)"><circle r="9.6" fill="#ff9a05"/><path d="M-3.9 4.4v-8.1q0-.9 .9-.9h4q.9 0 .9 .9v8.1z" fill="#fff"/><path d="M-2.75 -3.1h3.5v.85h-3.5z" fill="#ff9a05"/><circle cx="-1.05" cy=".7" r="1.05" fill="#ff9a05"/><path d="M2.3 -2.9l1.6 1.3v4.4c0 .9-1.35 .9-1.35 0v-2" fill="none" stroke="#fff" stroke-opacity=".6" stroke-width="1.1"/></g>
<g transform="translate(439.5 776.5)"><circle r="9.6" fill="#ff9a05"/><path d="M-3.9 4.4v-8.1q0-.9 .9-.9h4q.9 0 .9 .9v8.1z" fill="#fff"/><path d="M-2.75 -3.1h3.5v.85h-3.5z" fill="#ff9a05"/><circle cx="-1.05" cy=".7" r="1.05" fill="#ff9a05"/><path d="M2.3 -2.9l1.6 1.3v4.4c0 .9-1.35 .9-1.35 0v-2" fill="none" stroke="#fff" stroke-opacity=".6" stroke-width="1.1"/></g>
<g transform="translate(447.2 762.0)"><circle r="9.6" fill="#ff9a05"/><path d="M-3.9 4.4v-8.1q0-.9 .9-.9h4q.9 0 .9 .9v8.1z" fill="#fff"/><path d="M-2.75 -3.1h3.5v.85h-3.5z" fill="#ff9a05"/><circle cx="-1.05" cy=".7" r="1.05" fill="#ff9a05"/><path d="M2.3 -2.9l1.6 1.3v4.4c0 .9-1.35 .9-1.35 0v-2" fill="none" stroke="#fff" stroke-opacity=".6" stroke-width="1.1"/></g>
<g transform="translate(459.0 728.7)"><circle r="9.6" fill="#ff9a05"/><path d="M-3.9 4.4v-8.1q0-.9 .9-.9h4q.9 0 .9 .9v8.1z" fill="#fff"/><path d="M-2.75 -3.1h3.5v.85h-3.5z" fill="#ff9a05"/><circle cx="-1.05" cy=".7" r="1.05" fill="#ff9a05"/><path d="M2.3 -2.9l1.6 1.3v4.4c0 .9-1.35 .9-1.35 0v-2" fill="none" stroke="#fff" stroke-opacity=".6" stroke-width="1.1"/></g>
<g transform="translate(455.0 745.4)"><circle r="9.6" fill="#ff9a05"/><path d="M-3.9 4.4v-8.1q0-.9 .9-.9h4q.9 0 .9 .9v8.1z" fill="#fff"/><path d="M-2.75 -3.1h3.5v.85h-3.5z" fill="#ff9a05"/><circle cx="-1.05" cy=".7" r="1.05" fill="#ff9a05"/><path d="M2.3 -2.9l1.6 1.3v4.4c0 .9-1.35 .9-1.35 0v-2" fill="none" stroke="#fff" stroke-opacity=".6" stroke-width="1.1"/></g>
<g transform="translate(459.6 732.7)"><circle r="9.6" fill="#ff9a05"/><path d="M-3.9 4.4v-8.1q0-.9 .9-.9h4q.9 0 .9 .9v8.1z" fill="#fff"/><path d="M-2.75 -3.1h3.5v.85h-3.5z" fill="#ff9a05"/><circle cx="-1.05" cy=".7" r="1.05" fill="#ff9a05"/><path d="M2.3 -2.9l1.6 1.3v4.4c0 .9-1.35 .9-1.35 0v-2" fill="none" stroke="#fff" stroke-opacity=".6" stroke-width="1.1"/></g>
<g transform="translate(465.9 709.6)"><circle r="9.6" fill="#ff9a05"/><path d="M-3.9 4.4v-8.1q0-.9 .9-.9h4q.9 0 .9 .9v8.1z" fill="#fff"/><path d="M-2.75 -3.1h3.5v.85h-3.5z" fill="#ff9a05"/><circle cx="-1.05" cy=".7" r="1.05" fill="#ff9a05"/><path d="M2.3 -2.9l1.6 1.3v4.4c0 .9-1.35 .9-1.35 0v-2" fill="none" stroke="#fff" stroke-opacity=".6" stroke-width="1.1"/></g>
<g transform="translate(485.7 702.9)"><circle r="9.6" fill="#ff9a05"/><path d="M-3.9 4.4v-8.1q0-.9 .9-.9h4q.9 0 .9 .9v8.1z" fill="#fff"/><path d="M-2.75 -3.1h3.5v.85h-3.5z" fill="#ff9a05"/><circle cx="-1.05" cy=".7" r="1.05" fill="#ff9a05"/><path d="M2.3 -2.9l1.6 1.3v4.4c0 .9-1.35 .9-1.35 0v-2" fill="none" stroke="#fff" stroke-opacity=".6" stroke-width="1.1"/></g>
<g transform="translate(517.9 669.3)"><circle r="9.6" fill="#ff9a05"/><path d="M-3.9 4.4v-8.1q0-.9 .9-.9h4q.9 0 .9 .9v8.1z" fill="#fff"/><path d="M-2.75 -3.1h3.5v.85h-3.5z" fill="#ff9a05"/><circle cx="-1.05" cy=".7" r="1.05" fill="#ff9a05"/><path d="M2.3 -2.9l1.6 1.3v4.4c0 .9-1.35 .9-1.35 0v-2" fill="none" stroke="#fff" stroke-opacity=".6" stroke-width="1.1"/></g>
<g transform="translate(525.9 671.6)"><circle r="9.6" fill="#ff9a05"/><path d="M-3.9 4.4v-8.1q0-.9 .9-.9h4q.9 0 .9 .9v8.1z" fill="#fff"/><path d="M-2.75 -3.1h3.5v.85h-3.5z" fill="#ff9a05"/><circle cx="-1.05" cy=".7" r="1.05" fill="#ff9a05"/><path d="M2.3 -2.9l1.6 1.3v4.4c0 .9-1.35 .9-1.35 0v-2" fill="none" stroke="#fff" stroke-opacity=".6" stroke-width="1.1"/></g>
<g transform="translate(509.9 681.9)"><circle r="9.6" fill="#ff9a05"/><path d="M-3.9 4.4v-8.1q0-.9 .9-.9h4q.9 0 .9 .9v8.1z" fill="#fff"/><path d="M-2.75 -3.1h3.5v.85h-3.5z" fill="#ff9a05"/><circle cx="-1.05" cy=".7" r="1.05" fill="#ff9a05"/><path d="M2.3 -2.9l1.6 1.3v4.4c0 .9-1.35 .9-1.35 0v-2" fill="none" stroke="#fff" stroke-opacity=".6" stroke-width="1.1"/></g>
<g transform="translate(509.9 671.6)"><circle r="9.6" fill="#ff9a05"/><path d="M-3.9 4.4v-8.1q0-.9 .9-.9h4q.9 0 .9 .9v8.1z" fill="#fff"/><path d="M-2.75 -3.1h3.5v.85h-3.5z" fill="#ff9a05"/><circle cx="-1.05" cy=".7" r="1.05" fill="#ff9a05"/><path d="M2.3 -2.9l1.6 1.3v4.4c0 .9-1.35 .9-1.35 0v-2" fill="none" stroke="#fff" stroke-opacity=".6" stroke-width="1.1"/></g>
<g transform="translate(525.9 679.0)"><circle r="9.6" fill="#ff9a05"/><path d="M-3.9 4.4v-8.1q0-.9 .9-.9h4q.9 0 .9 .9v8.1z" fill="#fff"/><path d="M-2.75 -3.1h3.5v.85h-3.5z" fill="#ff9a05"/><circle cx="-1.05" cy=".7" r="1.05" fill="#ff9a05"/><path d="M2.3 -2.9l1.6 1.3v4.4c0 .9-1.35 .9-1.35 0v-2" fill="none" stroke="#fff" stroke-opacity=".6" stroke-width="1.1"/></g>
<g transform="translate(543.1 642.4)"><circle r="9.6" fill="#ff9a05"/><path d="M-3.9 4.4v-8.1q0-.9 .9-.9h4q.9 0 .9 .9v8.1z" fill="#fff"/><path d="M-2.75 -3.1h3.5v.85h-3.5z" fill="#ff9a05"/><circle cx="-1.05" cy=".7" r="1.05" fill="#ff9a05"/><path d="M2.3 -2.9l1.6 1.3v4.4c0 .9-1.35 .9-1.35 0v-2" fill="none" stroke="#fff" stroke-opacity=".6" stroke-width="1.1"/></g>
<g transform="translate(558.0 622.3)"><circle r="9.6" fill="#ff9a05"/><path d="M-3.9 4.4v-8.1q0-.9 .9-.9h4q.9 0 .9 .9v8.1z" fill="#fff"/><path d="M-2.75 -3.1h3.5v.85h-3.5z" fill="#ff9a05"/><circle cx="-1.05" cy=".7" r="1.05" fill="#ff9a05"/><path d="M2.3 -2.9l1.6 1.3v4.4c0 .9-1.35 .9-1.35 0v-2" fill="none" stroke="#fff" stroke-opacity=".6" stroke-width="1.1"/></g>
<g transform="translate(552.8 636.1)"><circle r="9.6" fill="#ff9a05"/><path d="M-3.9 4.4v-8.1q0-.9 .9-.9h4q.9 0 .9 .9v8.1z" fill="#fff"/><path d="M-2.75 -3.1h3.5v.85h-3.5z" fill="#ff9a05"/><circle cx="-1.05" cy=".7" r="1.05" fill="#ff9a05"/><path d="M2.3 -2.9l1.6 1.3v4.4c0 .9-1.35 .9-1.35 0v-2" fill="none" stroke="#fff" stroke-opacity=".6" stroke-width="1.1"/></g>
<g transform="translate(570.6 629.2)"><circle r="9.6" fill="#ff9a05"/><path d="M-3.9 4.4v-8.1q0-.9 .9-.9h4q.9 0 .9 .9v8.1z" fill="#fff"/><path d="M-2.75 -3.1h3.5v.85h-3.5z" fill="#ff9a05"/><circle cx="-1.05" cy=".7" r="1.05" fill="#ff9a05"/><path d="M2.3 -2.9l1.6 1.3v4.4c0 .9-1.35 .9-1.35 0v-2" fill="none" stroke="#fff" stroke-opacity=".6" stroke-width="1.1"/></g>
<g transform="translate(584.1 607.9)"><ellipse rx="10.6" ry="9.85" fill="#ff9a05"/><path d="M-3.9 4.4v-8.1q0-.9 .9-.9h4q.9 0 .9 .9v8.1z" fill="#fff"/><path d="M-2.75 -3.1h3.5v.85h-3.5z" fill="#ff9a05"/><circle cx="-1.05" cy=".7" r="1.05" fill="#ff9a05"/><path d="M2.3 -2.9l1.6 1.3v4.4c0 .9-1.35 .9-1.35 0v-2" fill="none" stroke="#fff" stroke-opacity=".6" stroke-width="1.1"/></g>
<g transform="translate(600.9 600.1)"><circle r="9.6" fill="#ff9a05"/><path d="M-3.9 4.4v-8.1q0-.9 .9-.9h4q.9 0 .9 .9v8.1z" fill="#fff"/><path d="M-2.75 -3.1h3.5v.85h-3.5z" fill="#ff9a05"/><circle cx="-1.05" cy=".7" r="1.05" fill="#ff9a05"/><path d="M2.3 -2.9l1.6 1.3v4.4c0 .9-1.35 .9-1.35 0v-2" fill="none" stroke="#fff" stroke-opacity=".6" stroke-width="1.1"/></g>
<g transform="translate(628.9 574.1)"><circle r="9.6" fill="#ff9a05"/><path d="M-3.9 4.4v-8.1q0-.9 .9-.9h4q.9 0 .9 .9v8.1z" fill="#fff"/><path d="M-2.75 -3.1h3.5v.85h-3.5z" fill="#ff9a05"/><circle cx="-1.05" cy=".7" r="1.05" fill="#ff9a05"/><path d="M2.3 -2.9l1.6 1.3v4.4c0 .9-1.35 .9-1.35 0v-2" fill="none" stroke="#fff" stroke-opacity=".6" stroke-width="1.1"/></g>
<g transform="translate(638.6 570.7)"><circle r="9.6" fill="#ff9a05"/><path d="M-3.9 4.4v-8.1q0-.9 .9-.9h4q.9 0 .9 .9v8.1z" fill="#fff"/><path d="M-2.75 -3.1h3.5v.85h-3.5z" fill="#ff9a05"/><circle cx="-1.05" cy=".7" r="1.05" fill="#ff9a05"/><path d="M2.3 -2.9l1.6 1.3v4.4c0 .9-1.35 .9-1.35 0v-2" fill="none" stroke="#fff" stroke-opacity=".6" stroke-width="1.1"/></g>
<g transform="translate(654.9 575.8)"><circle r="9.6" fill="#ff9a05"/><path d="M-3.9 4.4v-8.1q0-.9 .9-.9h4q.9 0 .9 .9v8.1z" fill="#fff"/><path d="M-2.75 -3.1h3.5v.85h-3.5z" fill="#ff9a05"/><circle cx="-1.05" cy=".7" r="1.05" fill="#ff9a05"/><path d="M2.3 -2.9l1.6 1.3v4.4c0 .9-1.35 .9-1.35 0v-2" fill="none" stroke="#fff" stroke-opacity=".6" stroke-width="1.1"/></g>
<g transform="translate(675.4 572.8)"><ellipse rx="10.6" ry="9.85" fill="#ff9a05"/><path d="M-3.9 4.4v-8.1q0-.9 .9-.9h4q.9 0 .9 .9v8.1z" fill="#fff"/><path d="M-2.75 -3.1h3.5v.85h-3.5z" fill="#ff9a05"/><circle cx="-1.05" cy=".7" r="1.05" fill="#ff9a05"/><path d="M2.3 -2.9l1.6 1.3v4.4c0 .9-1.35 .9-1.35 0v-2" fill="none" stroke="#fff" stroke-opacity=".6" stroke-width="1.1"/></g>
<ellipse cx="729.5" cy="571" rx="6" ry="1.8" fill="#000" opacity=".1"/>
<g transform="translate(727.1 570.3)"><path d="M0 0C-2.4 -5.2 -9.9 -9.6 -9.9 -16.8A9.9 9.9 0 0 1 9.9 -16.8C9.9 -9.6 2.4 -5.2 0 0Z" fill="#4cb35f"/><circle cx="0" cy="-16.6" r="4" fill="#fff"/></g>
</svg>
<div class="abs" style="left:1440px;top:837px;width:100px;height:33px;overflow:hidden"><div class="abs" style="left:0;top:0;width:100px;height:35px;border-radius:17.5px;background:#0470c6"></div><svg class="abs" style="left:15px;top:8.9px" width="17" height="17" viewBox="0 0 17 17"><circle cx="8.6" cy="7.8" r="6" fill="none" stroke="#fff" stroke-width="1.7"/><path d="M3.6 10.8L1.9 14.6L6.6 13.3Z" fill="#fff" stroke="#fff" stroke-width=".8" stroke-linejoin="round"/></svg><div class="t" id="sup" style="left:37.5px;top:10.5px;font-size:11.6px;line-height:14px;font-weight:bold;color:#fff;letter-spacing:.35px">Support</div></div>
</body></html>
